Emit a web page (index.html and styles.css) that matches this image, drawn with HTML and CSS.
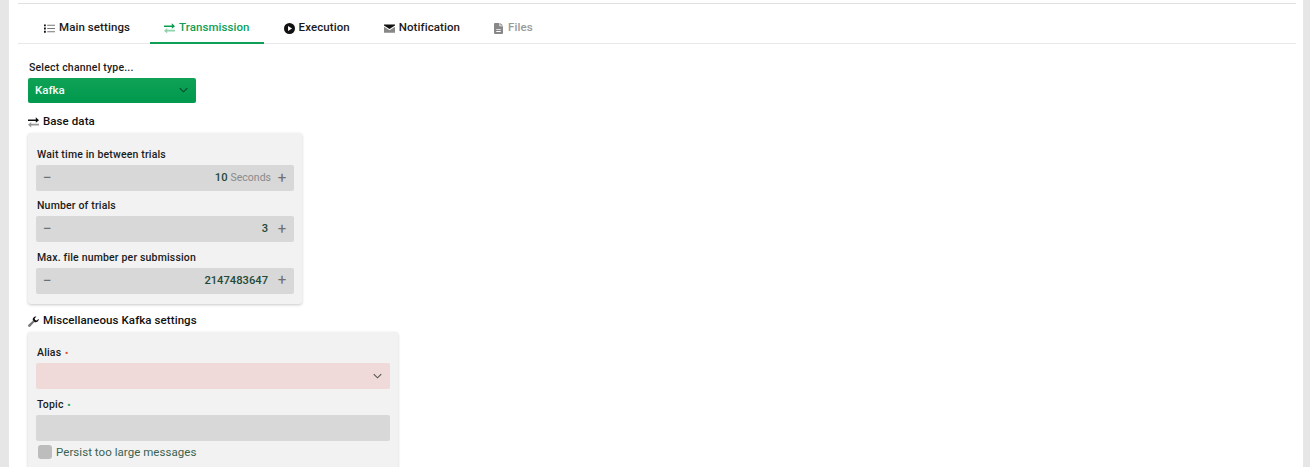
FILE: index.html
```html
<!DOCTYPE html>
<html lang="en">
<head>
<meta charset="utf-8">
<title>Transmission</title>
<link rel="stylesheet" href="styles.css">
</head>
<body>
<main class="page">
  <nav class="tabs">
    <a class="tab">
      <svg class="ico" viewBox="0 0 12 12"><path fill="#111" d="M0 1.500h2v2H0zM0 5h2v2H0zM0 8.500h2v2H0z"/><path fill="none" stroke="#777" stroke-width="1.200" d="M3.500 2.500H12M3.500 6H12M3.500 9.500H12"/></svg>
      Main settings
    </a>
    <a class="tab active">
      <svg class="ico" viewBox="0 0 12 12"><path fill="#0a9d50" d="M0 2.600h8.500V.4L12 3.500 8.500 6.300V4.400H0z"/><path fill="#8fd3ac" d="M12 7.400H3.500V5.400L0 8.500l3.500 3V9.200H12z"/></svg>
      Transmission
    </a>
    <a class="tab">
      <svg class="ico" viewBox="0 0 12 12"><circle cx="6" cy="6" r="6" fill="#111"/><path fill="#fff" d="M4.400 3.200 8.800 6l-4.400 2.800z"/></svg>
      Execution
    </a>
    <a class="tab">
      <svg class="ico" viewBox="0 0 12 12"><path fill="#111" d="M0 1.500h12v1.200L6 6.600 0 2.700z"/><path fill="#888" d="M0 4 6 7.800 12 4v6.500H0z"/></svg>
      Notification
    </a>
    <a class="tab disabled">
      <svg class="ico ico-file" viewBox="0 0 10 12"><path fill="#888" fill-rule="evenodd" d="M1 0h5v3.500h4V11a1 1 0 0 1-1 1H1a1 1 0 0 1-1-1V1a1 1 0 0 1 1-1zM7 0l3 2.600H7zM2.500 6.500v1h5v-1zM2.500 8.800v1h5v-1z"/></svg>
      Files
    </a>
  </nav>

  <section class="content">
    <div class="type-label">Select channel type...</div>
    <div class="type-select">
      <span>Kafka</span>
      <svg class="chev" viewBox="0 0 10 6"><path fill="none" stroke="#0a4a28" stroke-width="1.200" d="M.8.8 5 5 9.200.8"/></svg>
    </div>

    <h2 class="section base-title">
      <svg class="ico" viewBox="0 0 12 12"><path fill="#111" d="M0 2.600h8.500V.4L12 3.500 8.500 6.300V4.400H0z"/><path fill="#999" d="M12 7.400H3.500V5.400L0 8.500l3.500 3V9.200H12z"/></svg>
      Base data
    </h2>
    <div class="card card-base">
      <div class="field">
        <label>Wait time in between trials</label>
        <div class="stepper">
          <span class="sign">&minus;</span>
          <span class="value">10</span><span class="unit">Seconds</span>
          <span class="sign plus">+</span>
        </div>
      </div>
      <div class="field">
        <label>Number of trials</label>
        <div class="stepper">
          <span class="sign">&minus;</span>
          <span class="value">3</span>
          <span class="sign plus">+</span>
        </div>
      </div>
      <div class="field">
        <label>Max. file number per submission</label>
        <div class="stepper">
          <span class="sign">&minus;</span>
          <span class="value">2147483647</span>
          <span class="sign plus">+</span>
        </div>
      </div>
    </div>

    <h2 class="section misc-title">
      <svg class="ico" viewBox="0 0 12 12"><path fill="#777" d="M5.500 5 7 6.500 2.500 11.500a1.100 1.100 0 0 1-2-2z"/><path fill="#111" d="M8.500.5a3.300 3.300 0 0 0-3.200 4.200L7.300 6.700A3.300 3.300 0 0 0 11.600 3L9.600 5 7.800 4.400 7.200 2.600 9.200.6a3.300 3.300 0 0 0-.7-.1z"/></svg>
      Miscellaneous Kafka settings
    </h2>
    <div class="card card-misc">
      <div class="field">
        <label>Alias <i class="req bad">&bull;</i></label>
        <div class="input invalid">
          <svg class="chev" viewBox="0 0 10 6"><path fill="none" stroke="#555" stroke-width="1.200" d="M.8.8 5 5 9.200.8"/></svg>
        </div>
      </div>
      <div class="field">
        <label>Topic <i class="req ok">&bull;</i></label>
        <div class="input"></div>
      </div>
      <div class="check">
        <span class="box"></span>
        <span>Persist too large messages</span>
      </div>
    </div>
  </section>
</main>
</body>
</html>
```
FILE: styles.css
```css
* { box-sizing: border-box; }
html, body { height: 100%; }
body {
  margin: 0;
  background: #e6e6e6;
  font-family: Roboto, "Liberation Sans", sans-serif;
  color: #1b1b1b;
  overflow: hidden;
}
.page {
  margin: 0 7px 0 9px;
  padding: 3px 7px 0 9px;
  height: 467px;
  background: #fff;
  overflow: hidden;
}
.tabs {
  display: flex;
  gap: 6px;
  height: 41px;
  padding-left: 12px;
  border-top: 1px solid #e0e0e0;
  border-bottom: 1px solid #e8e8e8;
}
.tab {
  display: flex;
  align-items: center;
  gap: 4px;
  height: 40px;
  padding: 8px 14px 0;
  font-size: 11.500px;
  font-weight: 500;
  letter-spacing: .08px;
  border-bottom: 2px solid transparent;
  color: #1a1a1a;
}
.tab.active { color: #0e9f57; border-bottom-color: #0e9f57; }
.tab.disabled { color: #9a9a9a; }
.ico { width: 11px; height: 11px; flex: none; position: relative; top: 1px; }
.ico-file { width: 9px; height: 11px; margin-right: 1px; }
.content { padding: 15px 0 0 10px; }
.type-label { padding-left: 1px; font-size: 10.500px; font-weight: 500; line-height: 17px; letter-spacing: .19px; }
.type-select {
  display: flex;
  align-items: center;
  justify-content: space-between;
  width: 168px;
  height: 25px;
  margin-top: 2px;
  padding: 0 8px 1px 7px;
  border-radius: 2px;
  background: linear-gradient(#0fa257, #00994d);
  color: #f4fbf6;
  font-size: 11.500px;
  font-weight: 500;
}
.chev { width: 9px; height: 6px; }
.section {
  display: flex;
  align-items: center;
  gap: 4px;
  margin: 0;
  font-size: 11.500px;
  font-weight: 500;
  line-height: 14px;
  letter-spacing: .08px;
  color: #111;
}
.base-title { margin-top: 11px; }
.misc-title { margin-top: 9px; }
.card {
  margin-top: 5px;
  padding: 8px;
  background: #f2f2f2;
  border-radius: 3px;
  box-shadow: 0 1px 3px rgba(0, 0, 0, .22);
}
.card-base { width: 274px; height: 171px; }
.card-misc { width: 370px; height: 150px; padding-top: 7px; }
.field label {
  display: block;
  height: 24px;
  padding-left: 1px;
  line-height: 28px;
  font-size: 10.500px;
  font-weight: 500;
  letter-spacing: .17px;
  white-space: nowrap;
}
.card-base .field + .field { margin-top: 1.400px; }
.card-misc .field + .field { margin-top: 2px; }
.stepper, .input {
  display: flex;
  align-items: center;
  height: 26px;
  border-radius: 2px;
  background: #d8d8d8;
}
.stepper { padding: 0 7px 1px 6px; font-size: 11.200px; }
.sign { width: 10px; text-align: center; color: #707070; font-size: 16px; font-weight: 400; margin-right: auto; }
.sign.plus { margin: 0 0 0 9px; font-size: 15px; }
.value { color: #1f4a37; font-weight: 500; }
.unit { color: #8a8a8a; font-size: 10.500px; margin: 0 -3px 0 3px; }
.input.invalid { background: #f0dad9; justify-content: flex-end; padding-right: 8px; }
.req { font-style: normal; font-size: 9px; font-weight: 700; vertical-align: 0; margin-left: 1px; }
.req.bad { color: #e2502f; }
.req.ok { color: #12a85a; }
.check {
  display: flex;
  align-items: center;
  gap: 4px;
  margin-top: 4px;
  padding-left: 2px;
  font-size: 11.500px;
  letter-spacing: .05px;
  color: #3a6250;
}
.box { width: 14px; height: 14px; border-radius: 3px; background: #bdbdbd; }
```
